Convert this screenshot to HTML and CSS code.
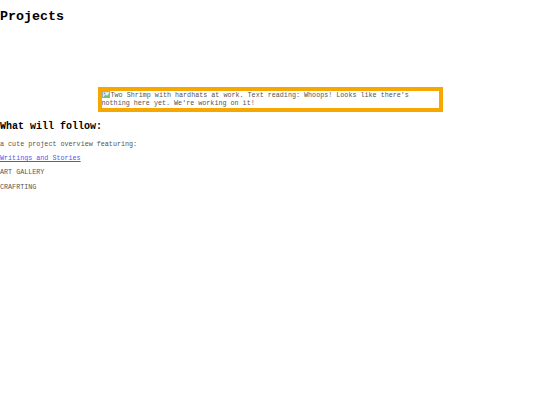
FILE: index.html
```html
<!DOCTYPE html>
<html lang="en">
<head>
    <meta charset="UTF-8">
    <meta name="viewport" content="width=device-width, initial-scale=1.0">
    <title>Projects</title>
    <link rel="stylesheet" href="styles.css">
</head>
<body>
    <h1>Projects</h1>

    <!-- Under construction banner (image missing, alt text shows) -->
    <div class="banner">
        <span class="banner-img"><svg class="broken" width="8" height="7" viewBox="0 0 8 7"><rect x="0.5" y="0.5" width="7" height="6" fill="#e4ecf4" stroke="#9ab"/><path d="M1 6.5 L3.5 3.5 L5 5 L7 2.5 L7 6.5 Z" fill="#7b7"/><circle cx="2.5" cy="2.3" r="0.9" fill="#5a9ae0"/></svg>Two Shrimp with hardhats at work. Text reading: Whoops! Looks like there's nothing here yet. We're working on it!</span>
    </div>

    <h2>What will follow:</h2>
    <p>a cute project overview featuring:</p>
    <p><a href="#">Writings and Stories</a></p>
    <p>ART GALLERY</p>
    <p>CRAFRTING</p>
</body>
</html>
```

FILE: styles.css
```css
body {
    font-family: "Liberation Mono", "Courier New", monospace;
    font-size: 6.72px;
    color: #555;
    margin: 0;
}
h1 {
    font-size: 13.33px;
    color: #000;
    margin: 9px 0 0 0;
    line-height: 15px;
}
h2 {
    font-size: 10px;
    color: #000;
    margin: 9px 0 0 0;
    line-height: 12px;
}
p {
    margin: 6.7px 0;
    line-height: 7.7px;
}
h2 + p {
    margin-top: 7.7px;
}
a {
    color: #55e;
}
.banner {
    margin-top: 63px;
    text-align: center;
    line-height: 0;
}
.banner-img {
    display: inline-block;
    box-sizing: border-box;
    width: 345px;
    border: 4px solid #f7a800;
    padding: 0 0 1px 0;
    text-align: left;
    line-height: 7.5px;
    color: #555;
}
.broken {
    vertical-align: -1px;
    margin-right: 1px;
}
```
